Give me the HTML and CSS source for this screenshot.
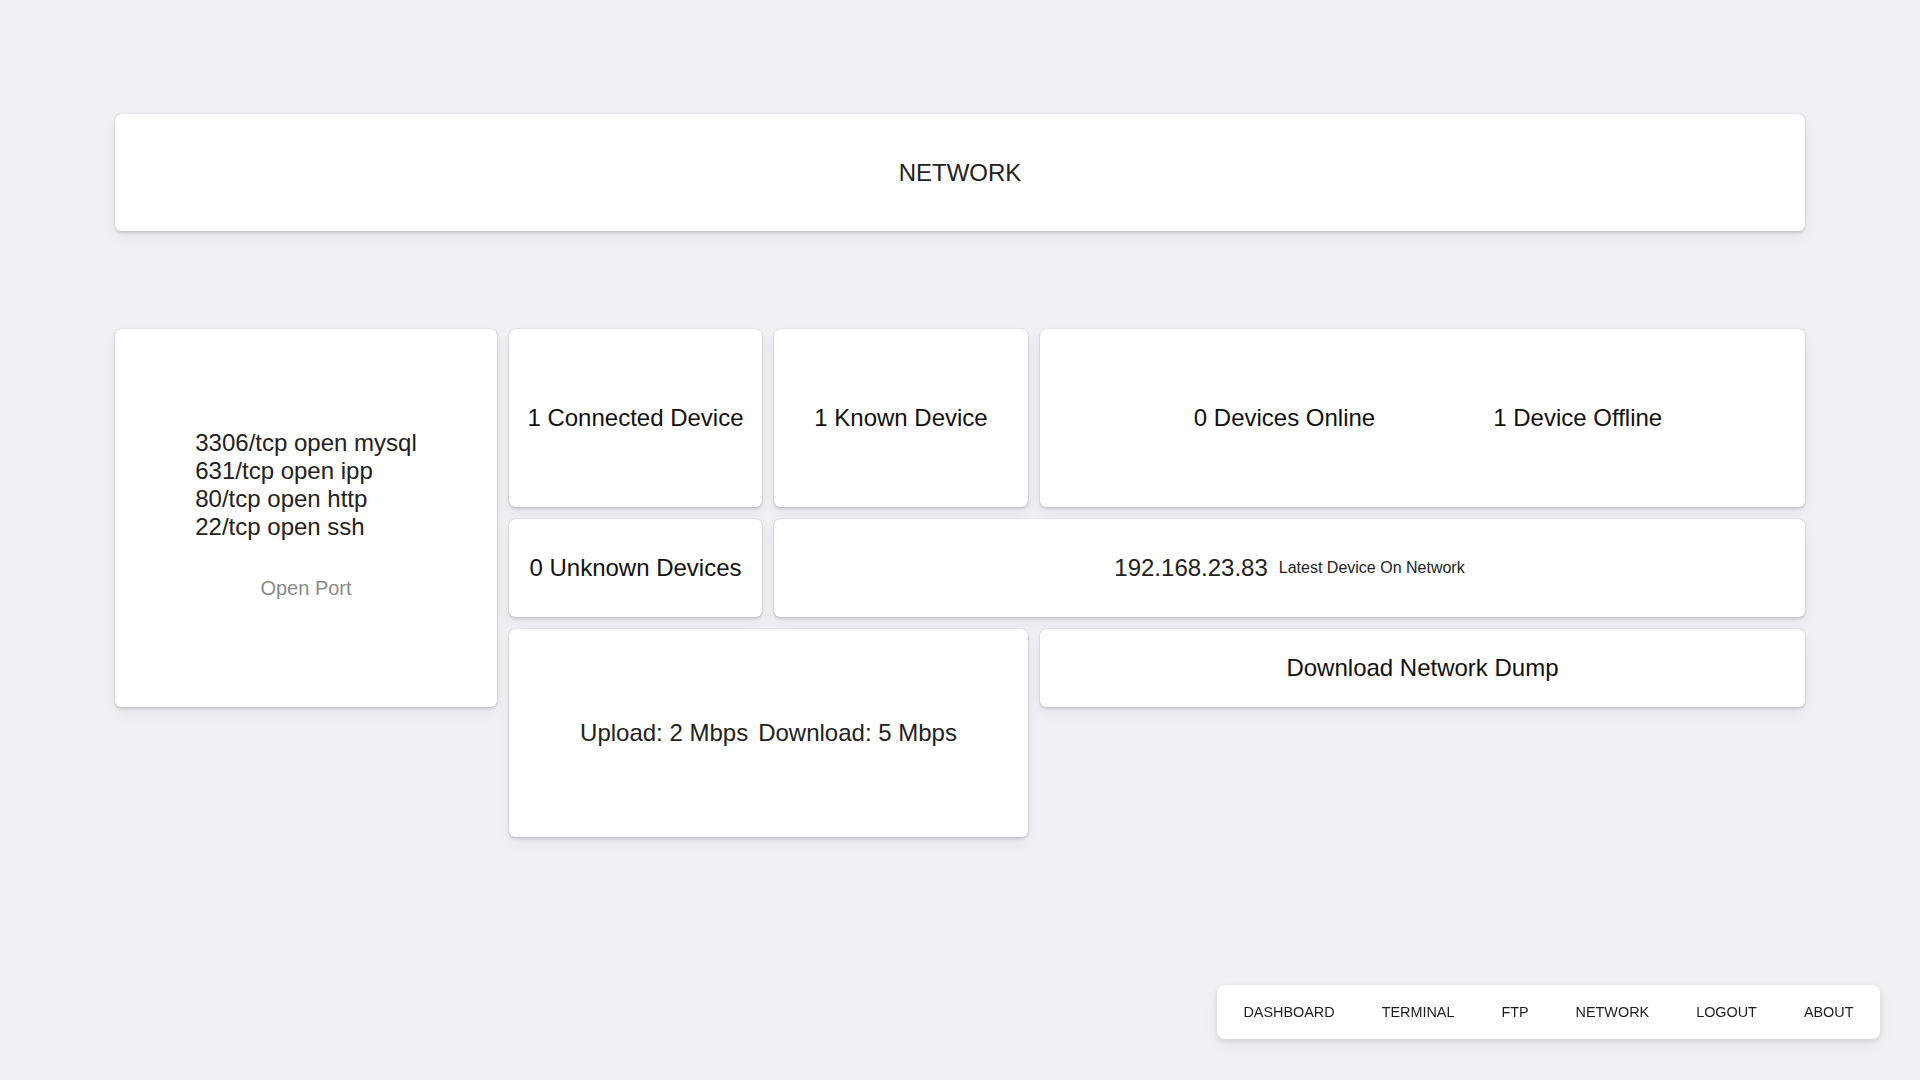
FILE: index.html
```html
<!DOCTYPE html>
<html lang="en">
<head>
<meta charset="utf-8">
<title>Network</title>
<link rel="stylesheet" href="styles.css">
</head>
<body>
<div class="page">
  <header class="card header">NETWORK</header>
  <main class="grid">
    <section class="card ports">
      <div class="port-list">
        <div>3306/tcp open mysql</div>
        <div>631/tcp open ipp</div>
        <div>80/tcp open http</div>
        <div>22/tcp open ssh</div>
      </div>
      <div class="port-label">Open Port</div>
    </section>
    <section class="card stat connected">1 Connected Device</section>
    <section class="card stat known">1 Known Device</section>
    <section class="card stat online">
      <span>0 Devices Online</span>
      <span>1 Device Offline</span>
    </section>
    <section class="card stat unknown">0 Unknown Devices</section>
    <section class="card stat latest">
      <span class="ip">192.168.23.83</span>
      <span class="ip-label">Latest Device On Network</span>
    </section>
    <section class="card stat speed">
      <span>Upload: 2 Mbps</span>
      <span>Download: 5 Mbps</span>
    </section>
    <section class="card stat dump">Download Network Dump</section>
  </main>
</div>
<nav class="nav">
  <a class="nav-item">DASHBOARD</a>
  <a class="nav-item">TERMINAL</a>
  <a class="nav-item">FTP</a>
  <a class="nav-item">NETWORK</a>
  <a class="nav-item">LOGOUT</a>
  <a class="nav-item">ABOUT</a>
</nav>
</body>
</html>
```
FILE: styles.css
```css
html, body {
  margin: 0;
  padding: 0;
}
body {
  background: #f0f1f5;
  font-family: "Liberation Sans", Arial, sans-serif;
  color: #1a1a1a;
  width: 1920px;
  height: 1080px;
  overflow: hidden;
}
.page {
  padding: 114px 0 0 115px;
  width: 1690px;
}
.card {
  background: #fff;
  border-radius: 6px;
  box-shadow: 0 0 1px rgba(0, 0, 0, 0.35), 0 2px 3px rgba(0, 0, 0, 0.12), 0 6px 14px rgba(0, 0, 0, 0.06);
  box-sizing: border-box;
}
.header {
  height: 117px;
  display: flex;
  align-items: center;
  justify-content: center;
  font-size: 24px;
  color: #222;
}
.grid {
  margin-top: 98px;
  display: grid;
  grid-template-columns: 382px 253px 254px 765px;
  grid-template-rows: 178px 98px 208px;
  column-gap: 12px;
  row-gap: 12px;
  align-items: start;
}
.stat {
  display: flex;
  align-items: center;
  justify-content: center;
  font-size: 24px;
  color: #111;
}
.ports {
  grid-column: 1;
  grid-row: 1 / 4;
  height: 378px;
  display: flex;
  flex-direction: column;
  align-items: center;
  justify-content: center;
  padding-bottom: 8px;
}
.port-list {
  font-size: 24px;
  line-height: 28px;
  color: #222;
}
.port-label {
  margin-top: 36px;
  font-size: 20px;
  color: #8a8a8a;
}
.connected { grid-column: 2; grid-row: 1; height: 178px; }
.known { grid-column: 3; grid-row: 1; height: 178px; }
.online {
  grid-column: 4;
  grid-row: 1;
  height: 178px;
  gap: 118px;
  padding-left: 11px;
}
.unknown { grid-column: 2; grid-row: 2; height: 98px; }
.latest {
  grid-column: 3 / 5;
  grid-row: 2;
  height: 98px;
  gap: 11px;
}
.ip { font-size: 24px; color: #222; }
.ip-label { font-size: 16px; color: #222; }
.speed {
  grid-column: 2 / 4;
  grid-row: 3;
  height: 208px;
  gap: 10px;
  color: #222;
}
.dump { grid-column: 4; grid-row: 3; height: 78px; }
.nav {
  position: fixed;
  right: 40px;
  bottom: 41px;
  height: 54px;
  display: flex;
  align-items: center;
  background: #fff;
  border-radius: 8px;
  box-shadow: 0 2px 6px rgba(0, 0, 0, 0.12), 0 6px 16px rgba(0, 0, 0, 0.05);
  padding: 0 3px;
}
.nav-item {
  font-size: 14.4px;
  color: #1e1e1e;
  padding: 0 23.5px;
  cursor: pointer;
}
```
